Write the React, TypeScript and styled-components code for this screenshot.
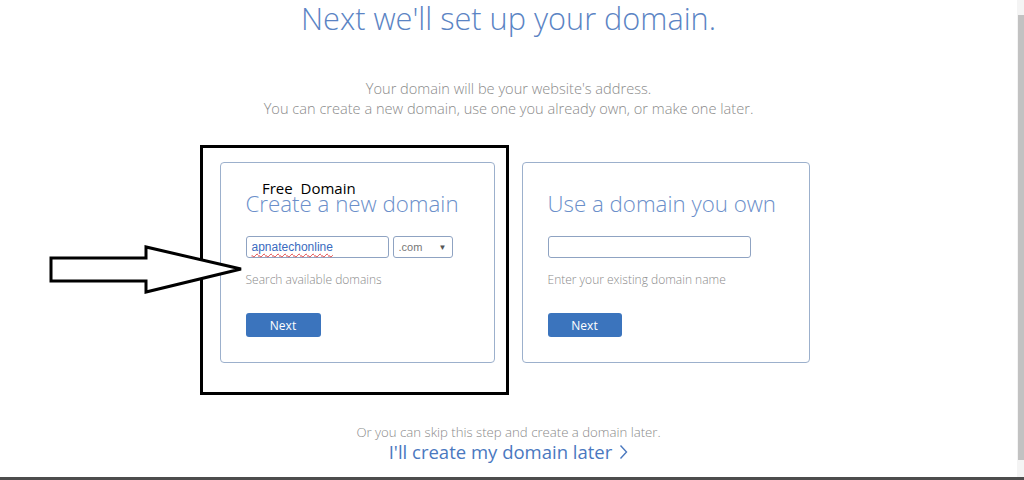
import styled, { createGlobalStyle } from "styled-components";

const GlobalStyle = createGlobalStyle`
    html, body {
        margin: 0;
        padding: 0;
        background: #ffffff;
        overflow: hidden;
    }
`;

const Screen = styled.div`
    width: 1024px;
    height: 480px;
    display: flex;
    flex-direction: column;
    font-family: "Open Sans", "Liberation Sans", sans-serif;
`;

const Window = styled.div`
    flex: 1;
    display: flex;
    min-height: 0;
`;

const Page = styled.main`
    position: relative;
    flex: 1;
    display: flex;
    flex-direction: column;
    align-items: center;
`;

const Title = styled.h1`
    margin: 0;
    font-size: 30.7px;
    line-height: 36px;
    font-weight: 300;
    color: #5b84c4;
`;

const Intro = styled.p`
    margin: 42px 0 0;
    font-size: 14.6px;
    line-height: 20px;
    font-weight: 300;
    color: #8a8a8a;
    text-align: center;
`;

const CardRow = styled.div`
    display: flex;
    gap: 27px;
    margin: 44px 0 0 12px;
`;

const Card = styled.section<{ $width: number }>`
    box-sizing: border-box;
    width: ${props => props.$width}px;
    height: 201px;
    padding: 26px 25px 0;
    border: 1px solid #9cb0cc;
    border-radius: 4px;
    display: flex;
    flex-direction: column;
    align-items: flex-start;
`;

const CardTitle = styled.h2`
    margin: 0;
    font-size: 22.3px;
    line-height: 30px;
    font-weight: 300;
    color: #6b8fca;
    white-space: nowrap;
`;

const FieldRow = styled.div`
    display: flex;
    gap: 4px;
    margin-top: 17px;
`;

const Field = styled.div<{ $width: number }>`
    box-sizing: border-box;
    width: ${props => props.$width}px;
    height: 22px;
    padding: 0 5px;
    border: 1px solid #8fa3c2;
    border-radius: 3px;
    display: flex;
    align-items: center;
    justify-content: space-between;
    font-family: "Liberation Sans", Arial, sans-serif;
    font-size: 12px;
`;

const TypedValue = styled.span`
    color: #3a6bc0;
    text-decoration: underline wavy #e04040;
    text-decoration-thickness: 1px;
    text-underline-offset: 2px;
`;

const SelectValue = styled.span`
    color: #777777;
    font-size: 11px;
`;

const Caret = styled.span`
    color: #555555;
    font-size: 8px;
`;

const Help = styled.p`
    margin: 13px 0 0;
    font-size: 12px;
    line-height: 18px;
    font-weight: 300;
    color: #8a8a8a;
`;

const NextButton = styled.button<{ $width: number }>`
    margin-top: 24px;
    width: ${props => props.$width}px;
    height: 24px;
    border: none;
    border-radius: 3px;
    background: #3b74bd;
    color: #ffffff;
    font-family: "Open Sans", "Liberation Sans", sans-serif;
    font-size: 12px;
    padding: 0;
`;

const Skip = styled.p`
    margin: 60px 0 0;
    font-size: 13.2px;
    line-height: 18px;
    font-weight: 300;
    color: #8a8a8a;
`;

const LaterLink = styled.a`
    display: flex;
    align-items: center;
    gap: 7px;
    margin-top: -1px;
    font-size: 18.5px;
    line-height: 24px;
    color: #4a78bf;
    text-decoration: none;
`;

const Annotation = styled.div`
    position: absolute;
    left: 200px;
    top: 145px;
    width: 309px;
    height: 250px;
    box-sizing: border-box;
    border: 3px solid #000000;
    pointer-events: none;
`;

const AnnotationLabel = styled.span`
    position: absolute;
    left: 262px;
    top: 178px;
    font-size: 15px;
    line-height: 20px;
    color: #000000;
    white-space: pre;
`;

const Arrow = styled.svg`
    position: absolute;
    left: 0;
    top: 240px;
`;

const Scrollbar = styled.aside`
    width: 7px;
    display: flex;
    flex-direction: column;
    align-items: stretch;
    background: #f4f4f4;
    padding: 15px 0 17px;
    box-sizing: border-box;
`;

const Thumb = styled.div`
    flex: 1;
    margin-left: 1px;
    background: #c2c2c2;
`;

const BottomBar = styled.div`
    height: 3px;
    background: #4d4d4d;
`;

const Chevron = () => (
    <svg width="9" height="16" viewBox="0 0 9 16">
        <path d="M1.5 1.5 L7.5 8 L1.5 14.5" fill="none" stroke="#4a78bf" strokeWidth="1.4" />
    </svg>
);

export default function App() {
    return (
        <Screen>
            <GlobalStyle />
            <Window>
                <Page>
                    <Title>Next we'll set up your domain.</Title>
                    <Intro>
                        Your domain will be your website's address.
                        <br />
                        You can create a new domain, use one you already own, or make one later.
                    </Intro>
                    <CardRow>
                        <Card $width={275}>
                            <CardTitle>Create a new domain</CardTitle>
                            <FieldRow>
                                <Field $width={143}>
                                    <TypedValue>apnatechonline</TypedValue>
                                </Field>
                                <Field $width={60}>
                                    <SelectValue>.com</SelectValue>
                                    <Caret>▼</Caret>
                                </Field>
                            </FieldRow>
                            <Help>Search available domains</Help>
                            <NextButton $width={75}>Next</NextButton>
                        </Card>
                        <Card $width={288}>
                            <CardTitle>Use a domain you own</CardTitle>
                            <FieldRow>
                                <Field $width={203} />
                            </FieldRow>
                            <Help>Enter your existing domain name</Help>
                            <NextButton $width={74}>Next</NextButton>
                        </Card>
                    </CardRow>
                    <Skip>Or you can skip this step and create a domain later.</Skip>
                    <LaterLink href="#">
                        I'll create my domain later
                        <Chevron />
                    </LaterLink>

                    <Annotation />
                    <AnnotationLabel>Free  Domain</AnnotationLabel>
                    <Arrow width="250" height="60" viewBox="0 240 250 60">
                        <polygon
                            points="51,258 146,258 146,247 241,269 146,292 146,281 51,281"
                            fill="#ffffff"
                            stroke="#000000"
                            strokeWidth="3"
                            strokeLinejoin="miter"
                        />
                    </Arrow>
                </Page>
                <Scrollbar>
                    <Thumb />
                </Scrollbar>
            </Window>
            <BottomBar />
        </Screen>
    );
}
